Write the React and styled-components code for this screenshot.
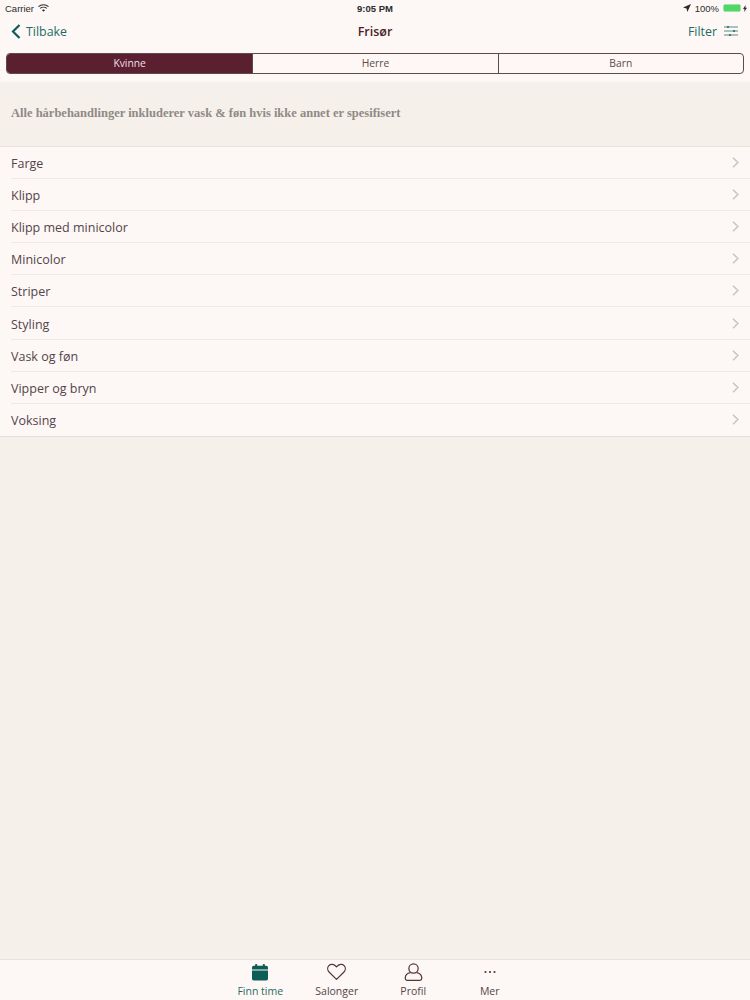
import React from 'react';
import styled, { createGlobalStyle } from 'styled-components';

const categories = ['Farge', 'Klipp', 'Klipp med minicolor', 'Minicolor', 'Striper', 'Styling', 'Vask og føn', 'Vipper og bryn', 'Voksing'];
const segments = ['Kvinne', 'Herre', 'Barn'];

const GlobalStyle = createGlobalStyle`
  html, body {
    margin: 0;
    padding: 0;
    background: #f6f0ea;
    font-family: "Open Sans", "Noto Sans", sans-serif;
  }
  * { box-sizing: border-box; }
`;

const CalendarIcon = () => (
  <svg width="16" height="18" viewBox="0 0 18 19">
    <rect x="3.5" y="0.5" width="2.4" height="4" rx="1" fill="#0e5c58" />
    <rect x="12.1" y="0.5" width="2.4" height="4" rx="1" fill="#0e5c58" />
    <path d="M2 2.5h14a2 2 0 0 1 2 2v2.2H0V4.500a2 2 0 0 1 2-2z" fill="#0e5c58" />
    <path d="M0 7.700h18V17a2 2 0 0 1-2 2H2a2 2 0 0 1-2-2z" fill="#0e5c58" />
  </svg>
);

const HeartIcon = () => (
  <svg width="19" height="18" viewBox="0 0 20 18" fill="none" stroke="#54363b" strokeWidth="1.300">
    <path d="M10 16.800 2.400 9.300C.2 7 .3 4 2 2.300 3.900.4 7.400.5 10 3.700 12.600.5 16.100.4 18 2.300c1.700 1.700 1.800 4.700-.4 7z" strokeLinejoin="round" />
  </svg>
);

const ProfileIcon = () => (
  <svg width="19" height="18" viewBox="0 0 19 19" fill="none" stroke="#54363b" strokeWidth="1.300">
    <circle cx="9.500" cy="5.800" r="4.900" />
    <path d="M6.200 10.200C3 10.800 1 12.700.8 15.500.7 17 1.500 18.300 3 18.300h13c1.500 0 2.300-1.300 2.200-2.800-.2-2.800-2.200-4.700-5.400-5.300" strokeLinejoin="round" />
  </svg>
);

const DotsIcon = () => (
  <svg width="12" height="18" viewBox="0 0 12 18" fill="#54363b">
    <circle cx="1.500" cy="9" r="1.100" />
    <circle cx="6" cy="9" r="1.100" />
    <circle cx="10.500" cy="9" r="1.100" />
  </svg>
);

const FilterIcon = () => (
  <svg width="15" height="12" viewBox="0 0 15 12" fill="#0e5c58" stroke="#0e5c58">
    <path d="M0 2h14M0 6h14M0 10h14" strokeWidth="0.700" />
    <circle cx="4" cy="2" r="0.800" strokeWidth="0.400" />
    <circle cx="10" cy="6" r="0.800" strokeWidth="0.400" />
    <circle cx="6" cy="10" r="0.800" strokeWidth="0.400" />
  </svg>
);

const BackIcon = () => (
  <svg width="10" height="15" viewBox="0 0 10 15" fill="none" stroke="#0e5c58" strokeWidth="2.200">
    <path d="M8.500 1 2 7.500 8.500 14" />
  </svg>
);

const WifiIcon = () => (
  <svg width="11" height="8" viewBox="0 0 11 8" fill="none" stroke="#2b2b2b" strokeWidth="1.100">
    <path d="M.5 2.600c2.800-2.500 7.200-2.500 10 0" />
    <path d="M2.200 4.400c1.800-1.600 4.800-1.600 6.600 0" />
    <path d="M5.500 7.800 3.900 6c.9-.7 2.300-.7 3.200 0z" fill="#2b2b2b" stroke="none" />
  </svg>
);

const LocationIcon = () => (
  <svg width="8" height="8" viewBox="0 0 8 8" fill="#2b2b2b">
    <path d="M8 0 0 3.600l3.500.8.900 3.600z" />
  </svg>
);

const BoltIcon = () => (
  <svg width="4" height="7" viewBox="0 0 4 7" fill="#2b2b2b">
    <path d="M2.600 0 0 4h1.500L1.200 7 4 2.800H2.400z" />
  </svg>
);

const ChevronIcon = () => (
  <svg width="7" height="11" viewBox="0 0 7 11" fill="none" stroke="#c9c6c4" strokeWidth="1.600">
    <path d="M1 .8 5.800 5.500 1 10.200" />
  </svg>
);

export default function App() {
  return (
    <Page>
      <GlobalStyle />
      <Header>
        <StatusBar>
          <StatusSide>Carrier <WifiIcon /></StatusSide>
          <StatusTime>9:05 PM</StatusTime>
          <StatusSide $right>
            <LocationIcon />
            100%
            <Battery><BatteryFill /></Battery>
            <BoltIcon />
          </StatusSide>
        </StatusBar>
        <NavBar>
          <NavAction><BackIcon />Tilbake</NavAction>
          <NavTitle>Frisør</NavTitle>
          <NavAction $right>Filter<FilterIcon /></NavAction>
        </NavBar>
        <SegmentBar>
          {segments.map((label, i) => (
            <Segment key={label} $active={i === 0}>{label}</Segment>
          ))}
        </SegmentBar>
      </Header>
      <Notice>Alle hårbehandlinger inkluderer vask &amp; føn hvis ikke annet er spesifisert</Notice>
      <List>
        {categories.map((name) => (
          <Row key={name}>
            <RowInner>
              <RowLabel>{name}</RowLabel>
              <ChevronIcon />
            </RowInner>
          </Row>
        ))}
      </List>
      <Spacer />
      <TabBar>
        <Tab $active><CalendarIcon />Finn time</Tab>
        <Tab><HeartIcon />Salonger</Tab>
        <Tab><ProfileIcon />Profil</Tab>
        <Tab><DotsIcon />Mer</Tab>
      </TabBar>
    </Page>
  );
}

const Page = styled.div`
  width: 750px;
  height: 1000px;
  display: flex;
  flex-direction: column;
  overflow: hidden;
  background: #f6f0ea;
`;

const Header = styled.header`
  height: 82px;
  background: #fdf8f5;
  padding: 0 6px;
`;

const StatusBar = styled.div`
  height: 16px;
  display: grid;
  grid-template-columns: 1fr auto 1fr;
  align-items: center;
  font-family: "Liberation Sans", sans-serif;
  font-size: 9.500px;
  color: #2b2b2b;
`;

const StatusSide = styled.div`
  display: flex;
  align-items: center;
  gap: 4px;
  justify-content: ${(p) => (p.$right ? 'flex-end' : 'flex-start')};
  margin: ${(p) => (p.$right ? '0 -3px 0 0' : '0 0 0 -1px')};
`;

const StatusTime = styled.div`
  font-weight: 700;
  font-size: 9.500px;
`;

const Battery = styled.div`
  width: 18px;
  height: 8px;
  border: 1px solid #a9dcae;
  border-radius: 2px;
  display: flex;
  margin-right: -2px;
`;

const BatteryFill = styled.div`
  flex: 1;
  background: #4cd964;
`;

const NavBar = styled.div`
  height: 31px;
  display: grid;
  grid-template-columns: 1fr auto 1fr;
  align-items: center;
  padding: 0 5px 1px 5px;
`;

const NavAction = styled.div`
  display: flex;
  align-items: center;
  gap: ${(p) => (p.$right ? '7px' : '5px')};
  justify-content: ${(p) => (p.$right ? 'flex-end' : 'flex-start')};
  font-size: 12.400px;
  color: #1f6a66;
`;

const NavTitle = styled.div`
  font-size: 12.500px;
  font-weight: 600;
  color: #4a1f2b;
`;

const SegmentBar = styled.div`
  margin-top: 6px;
  height: 21px;
  display: grid;
  grid-template-columns: repeat(3, 1fr);
  border: 1px solid #5e4a4e;
  border-radius: 4px;
  overflow: hidden;
`;

const Segment = styled.div`
  display: flex;
  align-items: center;
  justify-content: center;
  padding-bottom: 2px;
  font-size: 10.300px;
  color: ${(p) => (p.$active ? '#f3dfe0' : '#5e4a4e')};
  background: ${(p) => (p.$active ? '#5a1f30' : 'transparent')};
  & + & { border-left: 1px solid #5e4a4e; }
`;

const Notice = styled.div`
  height: 64px;
  padding: 0 11px 2px;
  display: flex;
  align-items: center;
  font-family: "Liberation Serif", serif;
  font-weight: 700;
  font-size: 12.500px;
  color: #8f8a86;
`;

const List = styled.div`
  background: #fdf8f6;
  border-top: 1px solid #e8e3de;
  border-bottom: 1px solid #e4dfda;
`;

const Row = styled.div`
  padding-left: 11px;
`;

const RowInner = styled.div`
  height: 32.100px;
  display: flex;
  align-items: center;
  justify-content: space-between;
  padding-right: 11px;
  font-size: 12.500px;
  color: #54444a;
  border-bottom: 1px solid #eee9e5;
  ${Row}:last-child & { border-bottom: none; }
`;

const RowLabel = styled.span`
  padding-top: 2px;
`;

const Spacer = styled.div`
  flex: 1;
`;

const TabBar = styled.nav`
  height: 41px;
  background: #fdf8f5;
  border-top: 1px solid #e8e3de;
  display: flex;
  justify-content: center;
`;

const Tab = styled.div`
  width: 76.500px;
  display: flex;
  flex-direction: column;
  align-items: center;
  justify-content: flex-end;
  gap: 4px;
  font-size: 10.500px;
  line-height: 13px;
  color: ${(p) => (p.$active ? '#1f6a66' : '#54444a')};
  padding-bottom: 2px;
`;
